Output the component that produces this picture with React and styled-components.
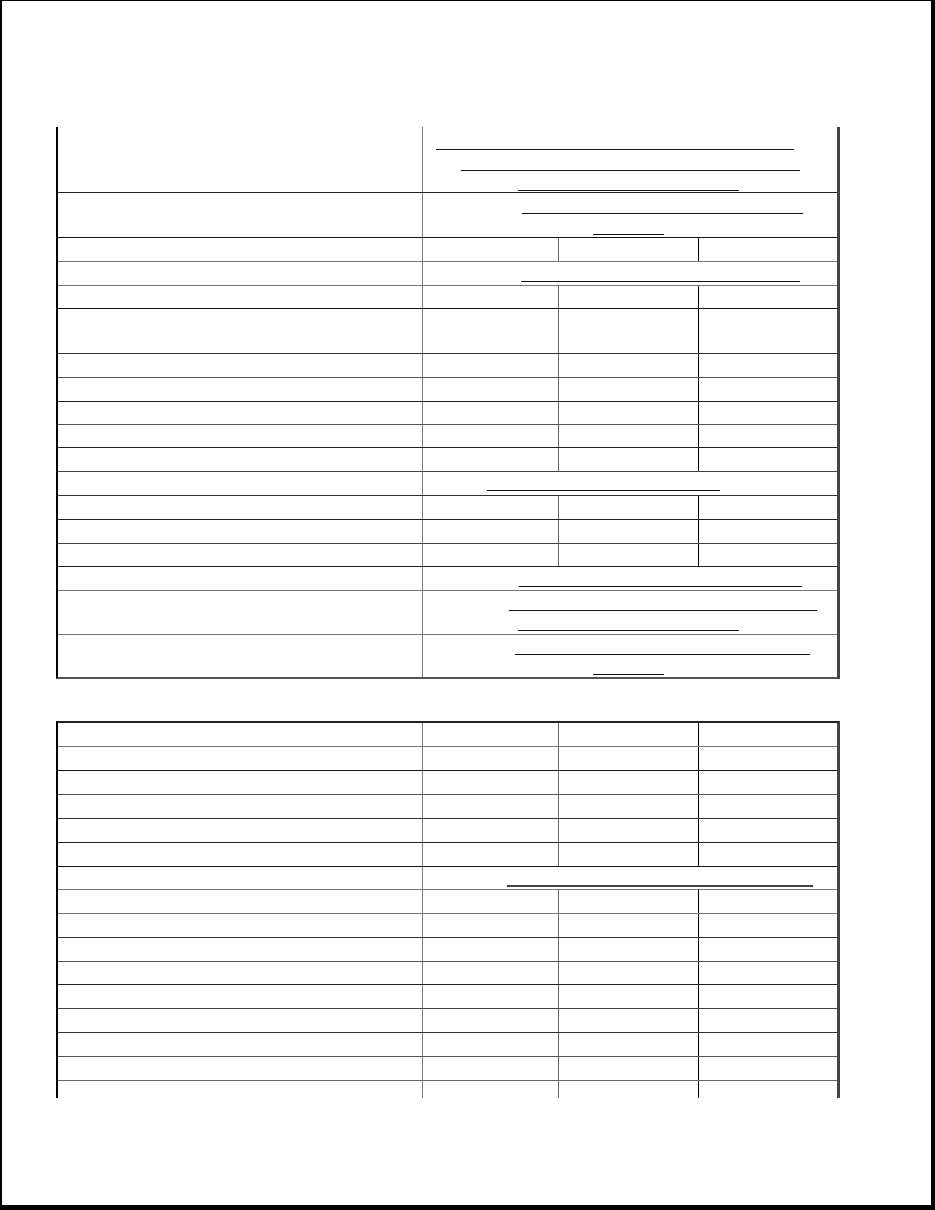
import React from 'react';
import styled, { createGlobalStyle } from 'styled-components';

const Global = createGlobalStyle`
  html, body {
    margin: 0;
    padding: 0;
    background: #fff;
    font-family: "Liberation Sans", Arial, sans-serif;
  }
`;

const Frame = styled.div`
  box-sizing: border-box;
  width: 935px;
  height: 1210px;
  border-style: solid;
  border-color: #000;
  border-width: 1px 4px 5px 2px;
  padding: 126px 0 0 54px;
  background: #fff;
  overflow: hidden;
`;

const Table = styled.div`
  box-sizing: border-box;
  width: 784px;
  border-left: 2px solid #000;
  border-right: 3px solid #444;
  border-top: ${(p) => (p.$top ? '2px solid #222' : 'none')};
  border-bottom: ${(p) => (p.$bottom ? '2px solid #555' : 'none')};
  & + & {
    margin-top: 42px;
  }
`;

const Row = styled.div`
  display: grid;
  grid-template-columns: 364px 136px 140px 139px;
  height: ${(p) => p.$h}px;
  border-bottom: ${(p) => (p.$last ? 'none' : `1px solid ${p.$line}`)};
`;

const Label = styled.div``;

const Sub = styled.div`
  box-sizing: border-box;
  border-left: 1px solid ${(p) => p.$c};
`;

const Span = styled.div`
  grid-column: 2 / 5;
  border-left: 1px solid #777;
  display: flex;
  flex-direction: column;
  align-items: flex-start;
`;

const Underline = styled.div`
  flex: none;
  height: ${(p) => (p.$thick ? 2 : 1)}px;
  background: ${(p) => (p.$thick ? '#444' : '#111')};
`;

// [left offset, width, top offset] inside the merged cell
const first = [
  { h: 65, line: '#222', lines: [[13, 358, 22], [38, 339, 43], [95, 221, 63]] },
  { h: 44, line: '#111', lines: [[99, 281, 20], [170, 71, 41]] },
  { h: 23, line: '#777' },
  { h: 23, line: '#777', lines: [[98, 279, 19]] },
  { h: 22, line: '#111' },
  { h: 44, line: '#333' },
  { h: 23, line: '#555' },
  { h: 23, line: '#222' },
  { h: 22, line: '#555' },
  { h: 22, line: '#222' },
  { h: 23, line: '#444' },
  { h: 23, line: '#333', lines: [[64, 233, 18]] },
  { h: 23, line: '#222' },
  { h: 23, line: '#444' },
  { h: 22, line: '#222' },
  { h: 23, line: '#777', lines: [[96, 283, 19]] },
  { h: 43, line: '#777', lines: [[86, 308, 19], [95, 221, 39]] },
  { h: 42, lines: [[92, 295, 19], [170, 71, 39]] },
];

const second = [
  { h: 23, line: '#777' },
  { h: 23, line: '#111' },
  { h: 23, line: '#555' },
  { h: 23, line: '#333' },
  { h: 23, line: '#222' },
  { h: 23, line: '#111' },
  { h: 22, line: '#777', lines: [[84, 306, 18]], thick: true },
  { h: 23, line: '#777' },
  { h: 23, line: '#333' },
  { h: 23, line: '#555' },
  { h: 22, line: '#222' },
  { h: 23, line: '#444' },
  { h: 23, line: '#333' },
  { h: 23, line: '#555' },
  { h: 23, line: '#666' },
  { h: 17 },
];

function MergedCell({ lines, thick }) {
  let bottom = 0;
  return (
    <Span>
      {lines.map(([x, w, y], i) => {
        const gap = y - bottom;
        bottom = y + (thick ? 2 : 1);
        return (
          <Underline
            key={i}
            $thick={thick}
            style={{ marginLeft: x, width: w, marginTop: gap }}
          />
        );
      })}
    </Span>
  );
}

function Rows({ data }) {
  return data.map((r, i) => (
    <Row key={i} $h={r.h} $line={r.line} $last={i === data.length - 1}>
      <Label />
      {r.lines ? (
        <MergedCell lines={r.lines} thick={r.thick} />
      ) : (
        <>
          <Sub $c="#777" />
          <Sub $c="#666" />
          <Sub $c="#000" />
        </>
      )}
    </Row>
  ));
}

export default function App() {
  return (
    <>
      <Global />
      <Frame>
        <Table $bottom>
          <Rows data={first} />
        </Table>
        <Table $top>
          <Rows data={second} />
        </Table>
      </Frame>
    </>
  );
}
